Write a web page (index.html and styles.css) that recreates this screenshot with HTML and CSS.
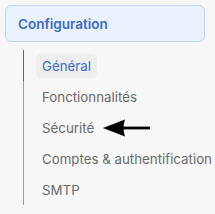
FILE: index.html
```html
<!DOCTYPE html>
<html lang="fr">
<head>
    <meta charset="UTF-8">
    <title>Configuration</title>
    <link rel="stylesheet" href="styles.css">
</head>
<body>
    <nav class="sidebar">
        <div class="section-head">Configuration</div>
        <ul class="submenu">
            <li class="active"><span class="item">Général</span></li>
            <li><span class="item">Fonctionnalités</span></li>
            <li>
                <span class="item">Sécurité</span>
                <!-- annotation arrow -->
                <svg class="pointer" width="48" height="20" viewBox="0 0 48 20">
                    <path d="M0 10 L22 1.5 Q19 10 22 18.5 Z" fill="#000"/>
                    <rect x="20" y="8.6" width="27" height="2.8" fill="#000"/>
                </svg>
            </li>
            <li><span class="item">Comptes &amp; authentification</span></li>
            <li><span class="item">SMTP</span></li>
        </ul>
    </nav>
</body>
</html>
```
FILE: styles.css
```css
/* --- Base --- */
body {
    margin: 0;
    background-color: #f7f7f7;
    font-family: Inter, "Noto Sans", sans-serif;
}

.sidebar {
    padding: 5px;
}

/* --- Section header --- */
.section-head {
    box-sizing: border-box;
    width: 200px;
    height: 37px;
    display: flex;
    align-items: center;
    padding-left: 12px;
    background-color: #e9f1fd;
    border: 1px solid #c4d7f6;
    border-radius: 6px;
    color: #3a6bc8;
    font-size: 13.5px;
    font-weight: 600;
}

/* --- Sub items --- */
.submenu {
    list-style: none;
    margin: 8px 0 0 18px;
    padding: 0;
}

.submenu li {
    height: 31px;
    display: flex;
    align-items: center;
    padding-left: 12px;
    border-left: 1.5px solid #9c9c9c;
    white-space: nowrap;
}

.submenu li.active { border-left-color: #3a6bc8; }

.item {
    padding: 0 6px;
    line-height: 24px;
    border-radius: 5px;
    color: #6a6a6a;
    font-size: 13.3px;
}

.active .item {
    background-color: #eeeeee;
    color: #3a6bc8;
}

.pointer { margin-left: 3px; }
```
